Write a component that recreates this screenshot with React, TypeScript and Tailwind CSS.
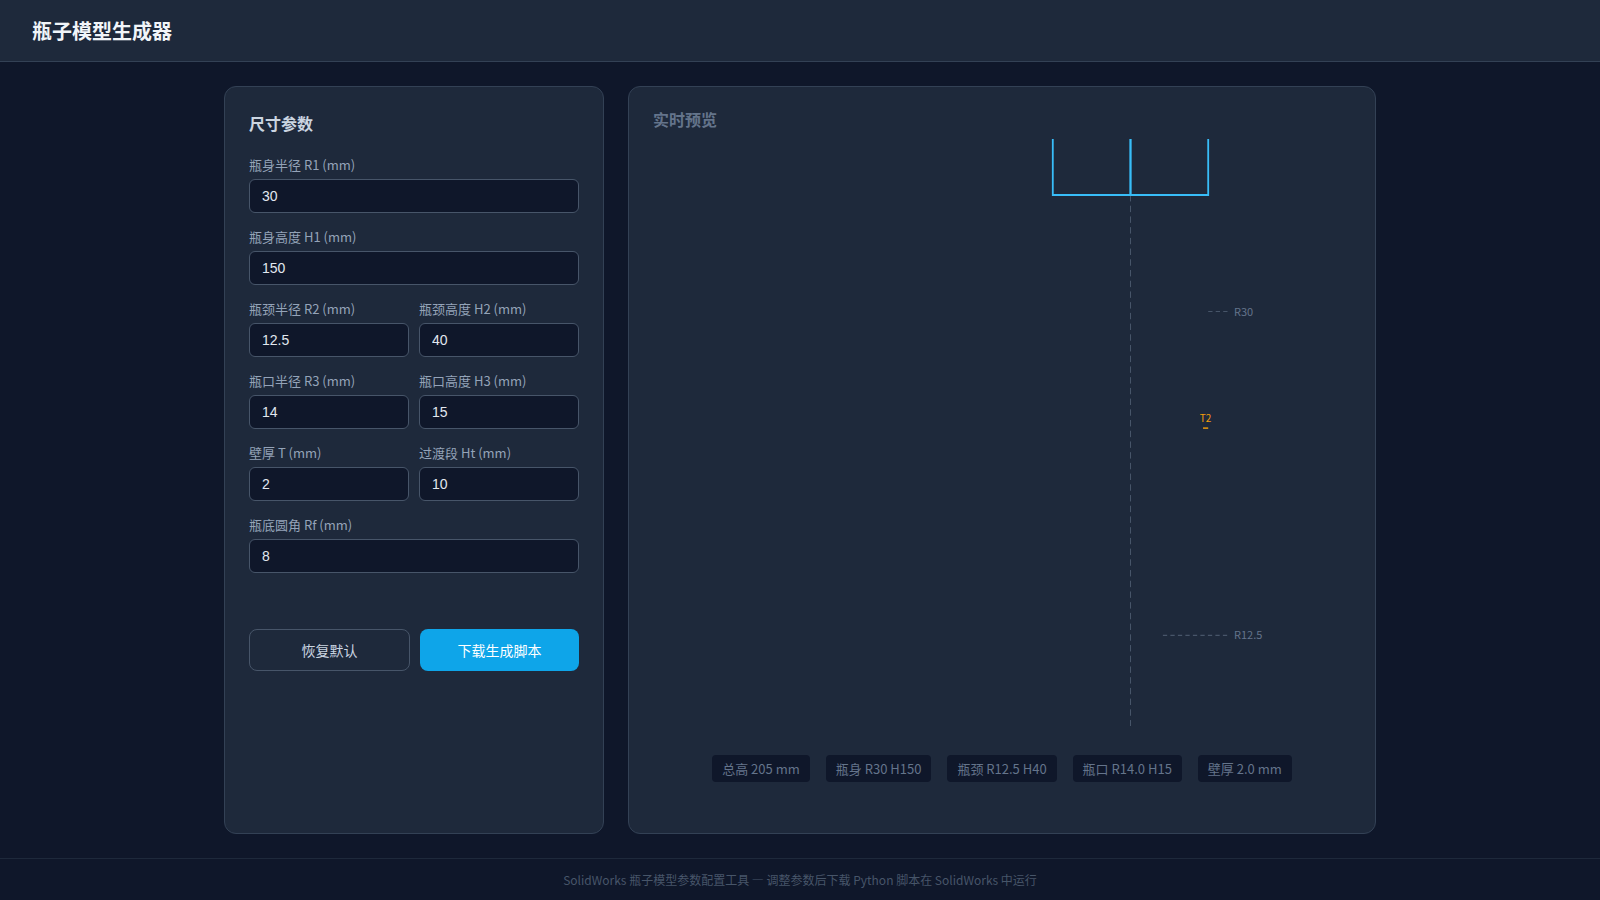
import { useState } from 'react';

const DEFAULTS = { R1: '30', H1: '150', R2: '12.5', H2: '40', R3: '14', H3: '15', T: '2', Ht: '10', Rf: '8' };

type Key = keyof typeof DEFAULTS;
type Params = Record<Key, number>;

const ROWS: { key: Key; label: string }[][] = [
  [{ key: 'R1', label: '瓶身半径 R1 (mm)' }],
  [{ key: 'H1', label: '瓶身高度 H1 (mm)' }],
  [{ key: 'R2', label: '瓶颈半径 R2 (mm)' }, { key: 'H2', label: '瓶颈高度 H2 (mm)' }],
  [{ key: 'R3', label: '瓶口半径 R3 (mm)' }, { key: 'H3', label: '瓶口高度 H3 (mm)' }],
  [{ key: 'T', label: '壁厚 T (mm)' }, { key: 'Ht', label: '过渡段 Ht (mm)' }],
  [{ key: 'Rf', label: '瓶底圆角 Rf (mm)' }],
];

function Field({ id, label, value, onChange }: { id: Key; label: string; value: string; onChange: (v: string) => void }) {
  return (
    <div className="flex-1 min-w-0">
      <label htmlFor={id} className="block mb-1 text-[13px] leading-5 text-[#94a3b8]">{label}</label>
      <input
        id={id}
        type="number"
        value={value}
        onChange={e => onChange(e.target.value)}
        className="block w-full rounded-md border border-[#475569] bg-[#0f172a] px-3 py-2 font-['Liberation_Sans',sans-serif] text-sm leading-4 text-[#e2e8f0] outline-none focus:border-[#38bdf8]"
      />
    </div>
  );
}

// 轴线、瓶身轮廓和尺寸标注
function Preview({ p }: { p: Params }) {
  const cx = 477.5;
  const y0 = 56;
  const s = 531 / (p.H1 + p.H2 + p.H3 || 1);
  const r1 = p.R1 * s;
  const r2 = p.R2 * s;
  const yBody = y0 + p.H1 * 0.3 * s;
  const yWall = y0 + p.H1 * 0.6 * s;
  const yNeck = y0 + (p.H1 + p.H2 / 2) * s;
  const top = y0 - p.H1 * s;

  return (
    <svg viewBox="0 0 698 592" className="block w-full overflow-hidden" role="img" aria-label="实时预览">
      <line x1={cx} y1={y0} x2={cx} y2={587} stroke="#475569" strokeWidth={1} strokeDasharray="6.43 4.285" />
      <g fill="none" stroke="#38bdf8" strokeWidth={1.8}>
        <path d={`M${cx} ${y0}H${cx + r1}V${top}H${cx}Z`} />
        <path d={`M${cx} ${y0}H${cx - r1}V${top}H${cx}Z`} />
      </g>
      <g stroke="#475569" strokeWidth={1.1} strokeDasharray="4.3 3.2">
        <line x1={cx + r1} y1={yBody} x2={575} y2={yBody} />
        <line x1={cx + r2} y1={yNeck} x2={575} y2={yNeck} />
      </g>
      <g fill="#64748b" fontSize={11}>
        <text x={581} y={yBody + 4}>R{p.R1}</text>
        <text x={581} y={yNeck + 4}>R{p.R2}</text>
      </g>
      <line x1={cx + r1 - p.T * s} y1={yWall} x2={cx + r1} y2={yWall} stroke="#f59e0b" strokeWidth={1.6} opacity={0.9} />
      <text x={cx + r1 - (p.T * s) / 2} y={yWall - 6} fontSize={10} fill="#f59e0b" textAnchor="middle">T{p.T}</text>
    </svg>
  );
}

export default function App() {
  const [values, setValues] = useState(DEFAULTS);
  const p = Object.fromEntries(Object.entries(values).map(([k, v]) => [k, Number(v) || 0])) as Params;

  const chips = [
    `总高 ${p.H1 + p.H2 + p.H3} mm`,
    `瓶身 R${p.R1} H${p.H1}`,
    `瓶颈 R${p.R2} H${p.H2}`,
    `瓶口 R${p.R3.toFixed(1)} H${p.H3}`,
    `壁厚 ${p.T.toFixed(1)} mm`,
  ];

  const download = () => {
    const script = Object.entries(p).map(([k, v]) => `${k} = ${v}`).join('\n');
    const a = document.createElement('a');
    a.href = URL.createObjectURL(new Blob([script], { type: 'text/x-python' }));
    a.download = 'bottle.py';
    a.click();
    URL.revokeObjectURL(a.href);
  };

  return (
    <div lang="zh-CN" className="flex min-h-screen flex-col bg-[#0f172a] font-['Noto_Sans_CJK_SC',sans-serif] text-[#e2e8f0]">
      <header className="border-b border-[#334155] bg-[#1e293b] px-8 py-4">
        <h1 className="text-xl leading-[29px] font-bold text-[#f1f5f9]">瓶子模型生成器</h1>
      </header>

      <main className="mx-auto flex w-full max-w-[1200px] flex-1 gap-6 p-6">
        <section className="w-[380px] shrink-0 rounded-xl border border-[#334155] bg-[#1e293b] p-6">
          <h2 className="mb-5 text-base leading-6 font-bold text-[#cbd5e1]">尺寸参数</h2>
          <div className="flex flex-col gap-[14px]">
            {ROWS.map(row => (
              <div key={row[0].key} className="flex gap-[10px]">
                {row.map(f => (
                  <Field key={f.key} id={f.key} label={f.label} value={values[f.key]} onChange={v => setValues(s => ({ ...s, [f.key]: v }))} />
                ))}
              </div>
            ))}
          </div>
          <div className="mt-14 flex gap-[10px] text-sm leading-5">
            <button type="button" onClick={() => setValues(DEFAULTS)} className="flex-1 rounded-lg border border-[#475569] py-[10px] text-[#cbd5e1] hover:bg-[#334155]">恢复默认</button>
            <button type="button" onClick={download} className="flex-1 rounded-lg bg-[#0ea5e9] py-[10px] text-white hover:bg-[#0284c7]">下载生成脚本</button>
          </div>
        </section>

        <section className="min-w-0 flex-1 rounded-xl border border-[#334155] bg-[#1e293b] p-6">
          <h2 className="mb-3 text-base leading-4 font-bold text-[#64748b]">实时预览</h2>
          <Preview p={p} />
          <ul className="mt-6 flex flex-wrap justify-center gap-4 text-[13px] leading-[19px] text-[#64748b]">
            {chips.map(c => <li key={c} className="rounded bg-[#0f172a] px-[10px] py-1">{c}</li>)}
          </ul>
        </section>
      </main>

      <footer className="border-t border-[#1e293b] py-3 text-center text-xs leading-[17px] text-[#475569]">
        SolidWorks 瓶子模型参数配置工具 — 调整参数后下载 Python 脚本在 SolidWorks 中运行
      </footer>
    </div>
  );
}
